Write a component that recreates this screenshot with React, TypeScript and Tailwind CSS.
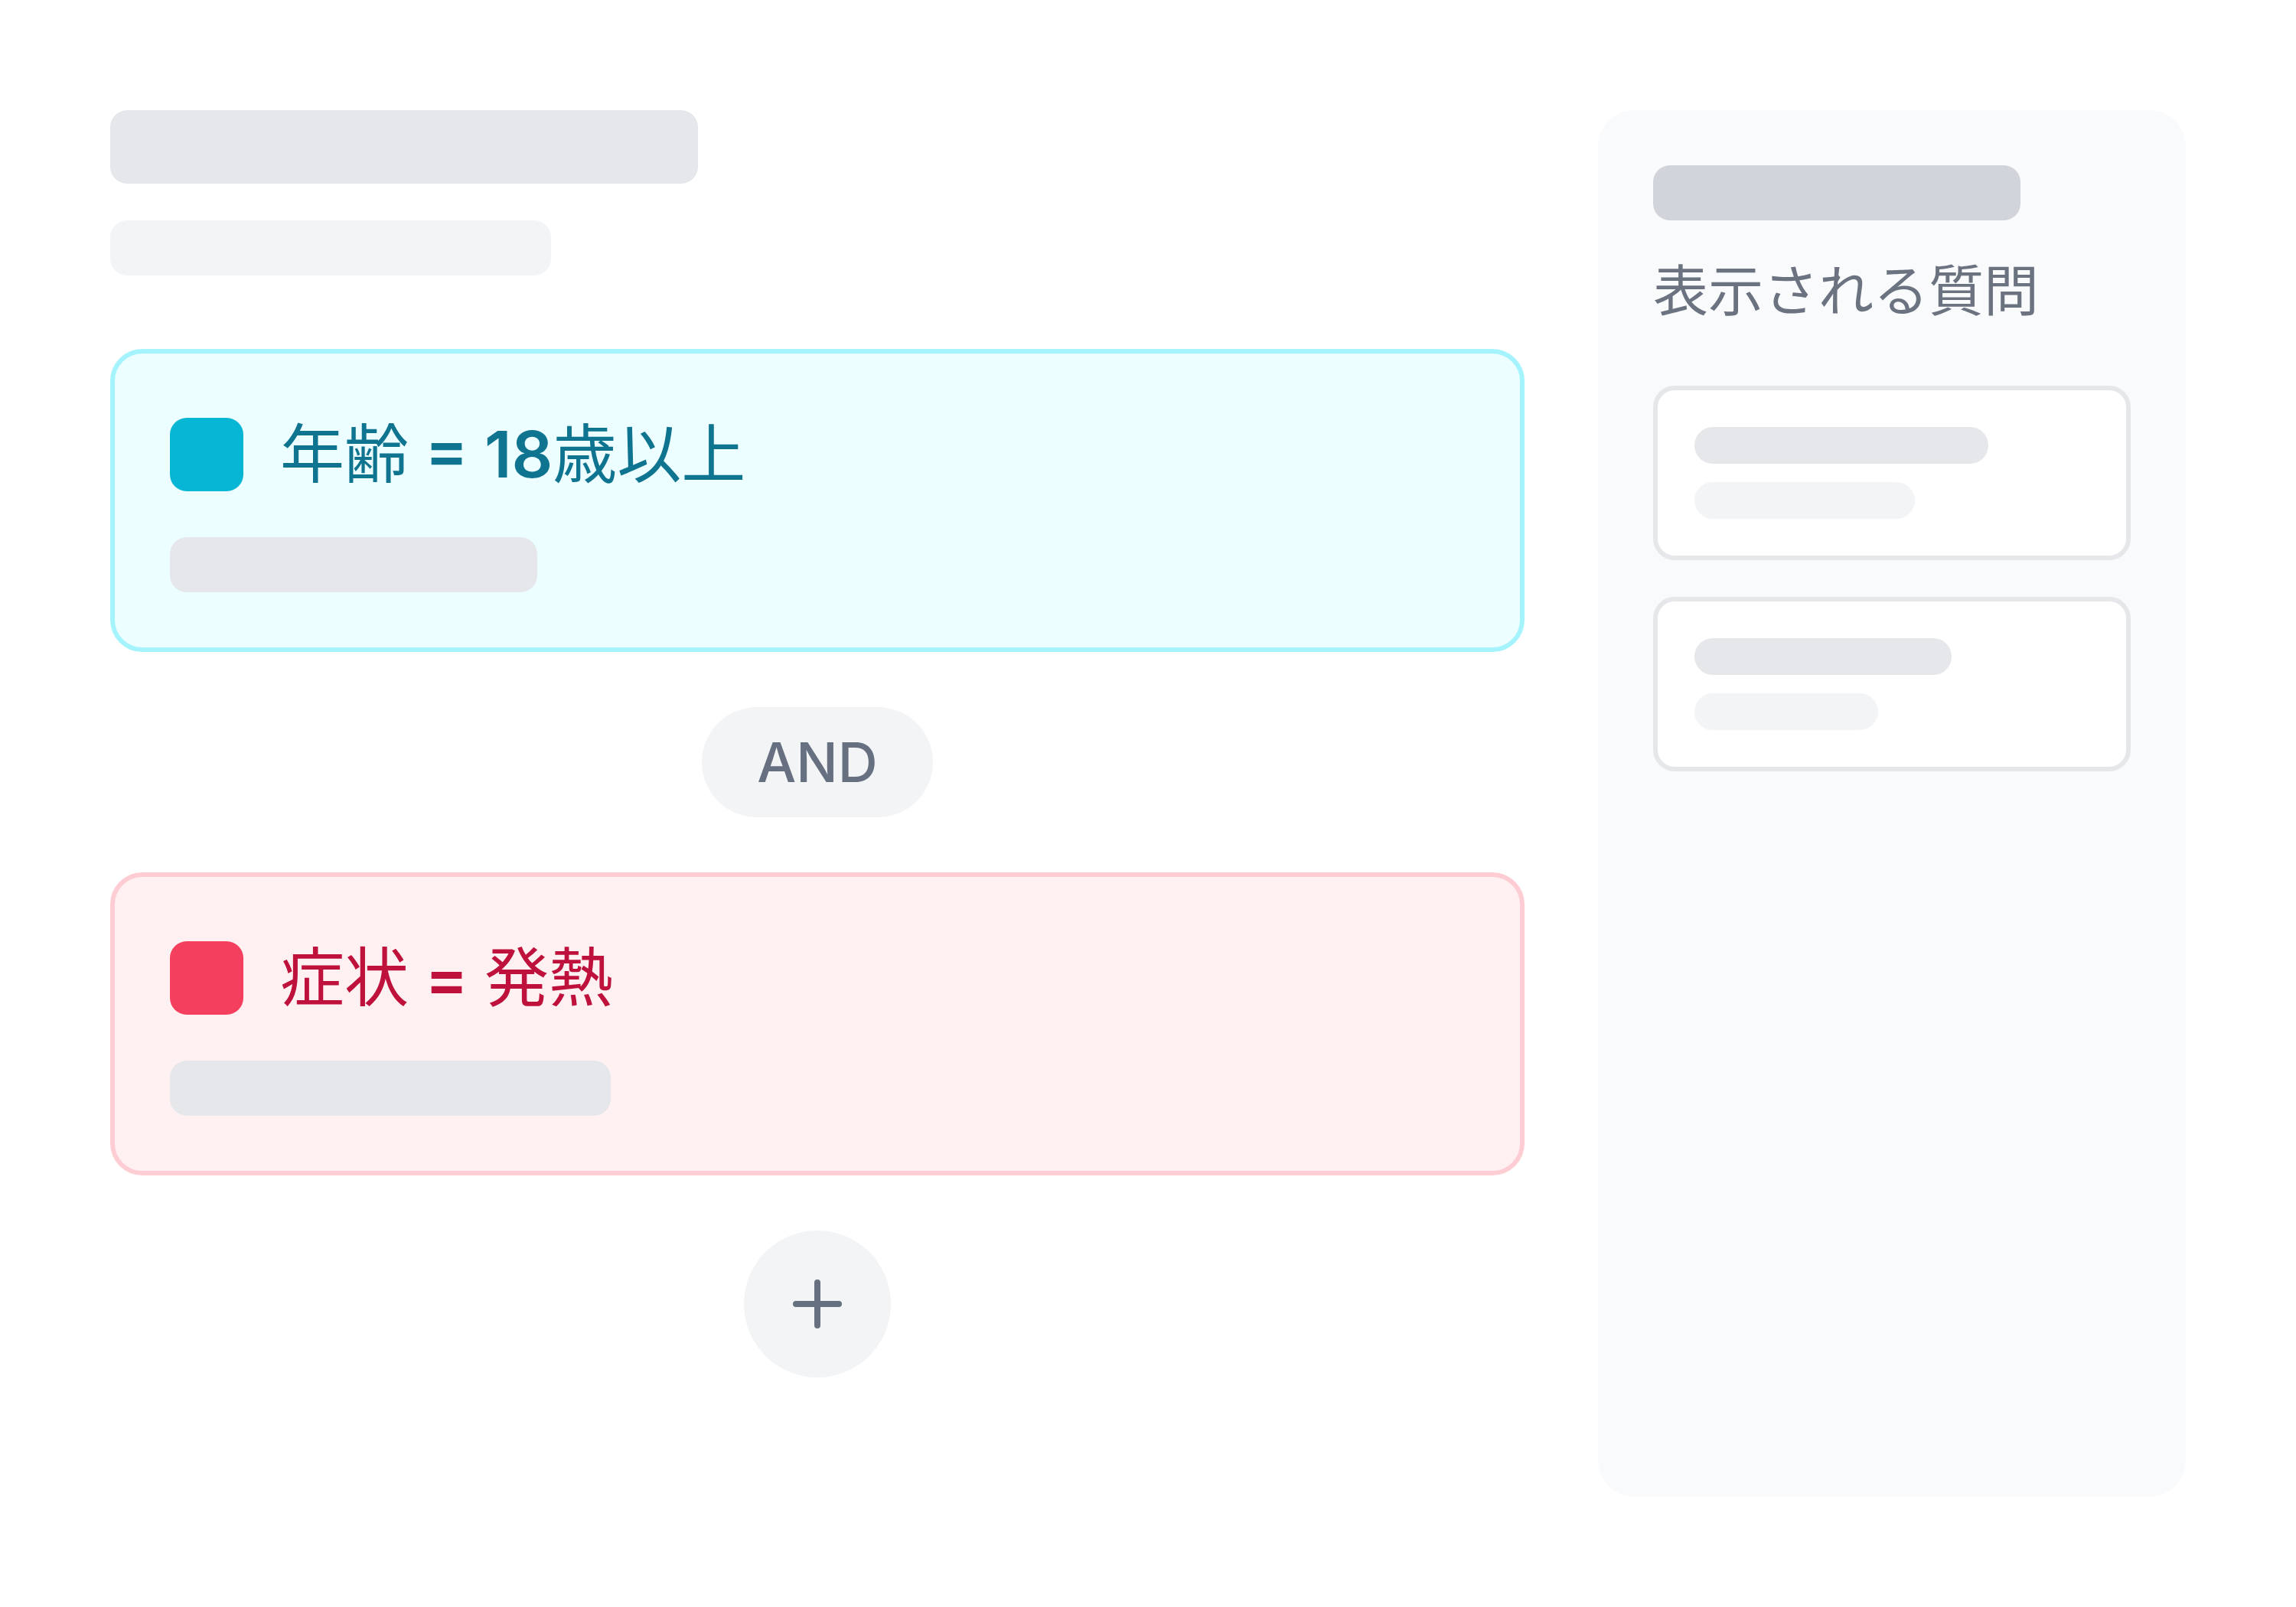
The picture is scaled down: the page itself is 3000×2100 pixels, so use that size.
const cjk = "font-['Inter','Noto_Sans_CJK_JP',sans-serif]";

function Skeleton({ w, h, tone }: { w: string; h: string; tone: string }) {
  return <div className={`${w} ${h} ${tone} rounded-[22px]`} />;
}

function RuleCard({
  tone,
  label,
  field,
  num,
  value,
  barWidth,
}: {
  tone: 'cyan' | 'rose';
  label: string;
  field: string;
  num?: string;
  value: string;
  barWidth: string;
}) {
  const box =
    tone === 'cyan'
      ? 'bg-[#ecfeff] border-[#a5f3fc]'
      : 'bg-[#fff1f2] border-[#fecdd3]';
  const dot = tone === 'cyan' ? 'bg-[#06b6d4]' : 'bg-[#f43f5e]';
  const text = tone === 'cyan' ? 'text-[#0e7490]' : 'text-[#be123c]';

  return (
    <div className={`rounded-[42px] border-[6px] p-[72px] ${box}`} aria-label={label}>
      <div className="flex h-[120px] items-center gap-[48px]">
        <div className={`h-[96px] w-[96px] shrink-0 rounded-[22px] ${dot}`} />
        <div className={`${cjk} text-[84px] leading-[120px] whitespace-nowrap ${text}`}>
          {field}
          <span className="font-semibold"> = {num}</span>
          {value}
        </div>
      </div>
      <div className="mt-[48px]">
        <Skeleton w={barWidth} h="h-[72px]" tone="bg-[#e5e7eb]" />
      </div>
    </div>
  );
}

function QuestionCard({ first, second }: { first: string; second: string }) {
  return (
    <div className="rounded-[28px] border-[6px] border-[#e5e7eb] bg-white p-[48px]">
      <div className={`${first} h-[48px] rounded-full bg-[#e5e7eb]`} />
      <div className={`${second} mt-[24px] h-[48px] rounded-full bg-[#f3f4f6]`} />
    </div>
  );
}

export default function App() {
  return (
    <div className="flex h-[2100px] w-[3000px] gap-[96px] bg-white p-[144px]">
      {/* 条件ビルダー */}
      <div className="flex min-w-0 flex-1 flex-col">
        <Skeleton w="w-[768px]" h="h-[96px]" tone="bg-[#e5e7eb]" />
        <div className="mt-[48px]">
          <Skeleton w="w-[576px]" h="h-[72px]" tone="bg-[#f3f4f6]" />
        </div>

        <div className="mt-[96px]">
          <RuleCard tone="cyan" label="age" field="年齢" num="18" value="歳以上" barWidth="w-[480px]" />
        </div>

        <div className="mt-[72px] flex justify-center">
          <div className="flex h-[144px] items-center rounded-full bg-[#f3f4f6] px-[72px] font-['Inter',sans-serif] text-[72px] font-medium text-[#667080]">
            AND
          </div>
        </div>

        <div className="mt-[72px]">
          <RuleCard tone="rose" label="symptom" field="症状" value="発熱" barWidth="w-[576px]" />
        </div>

        <div className="mt-[72px] flex justify-center">
          <button className="flex h-[192px] w-[192px] items-center justify-center rounded-full bg-[#f3f4f6]">
            <svg width="64" height="64" viewBox="0 0 64 64" fill="none">
              <path d="M4 32h56M32 4v56" stroke="#667080" strokeWidth="8" strokeLinecap="round" />
            </svg>
          </button>
        </div>
      </div>

      {/* 表示される質問 */}
      <div className="w-[768px] shrink-0 rounded-[48px] bg-[#f9fafb] p-[72px]">
        <Skeleton w="w-[480px]" h="h-[72px]" tone="bg-[#d1d5db]" />
        <div className="mt-[42px] font-['Noto_Sans_CJK_JP',sans-serif] text-[72px] leading-[90px] text-[#6b7280]">
          表示される質問
        </div>
        <div className="mt-[84px] flex flex-col gap-[48px]">
          <QuestionCard first="w-[384px]" second="w-[288px]" />
          <QuestionCard first="w-[336px]" second="w-[240px]" />
        </div>
      </div>
    </div>
  );
}
